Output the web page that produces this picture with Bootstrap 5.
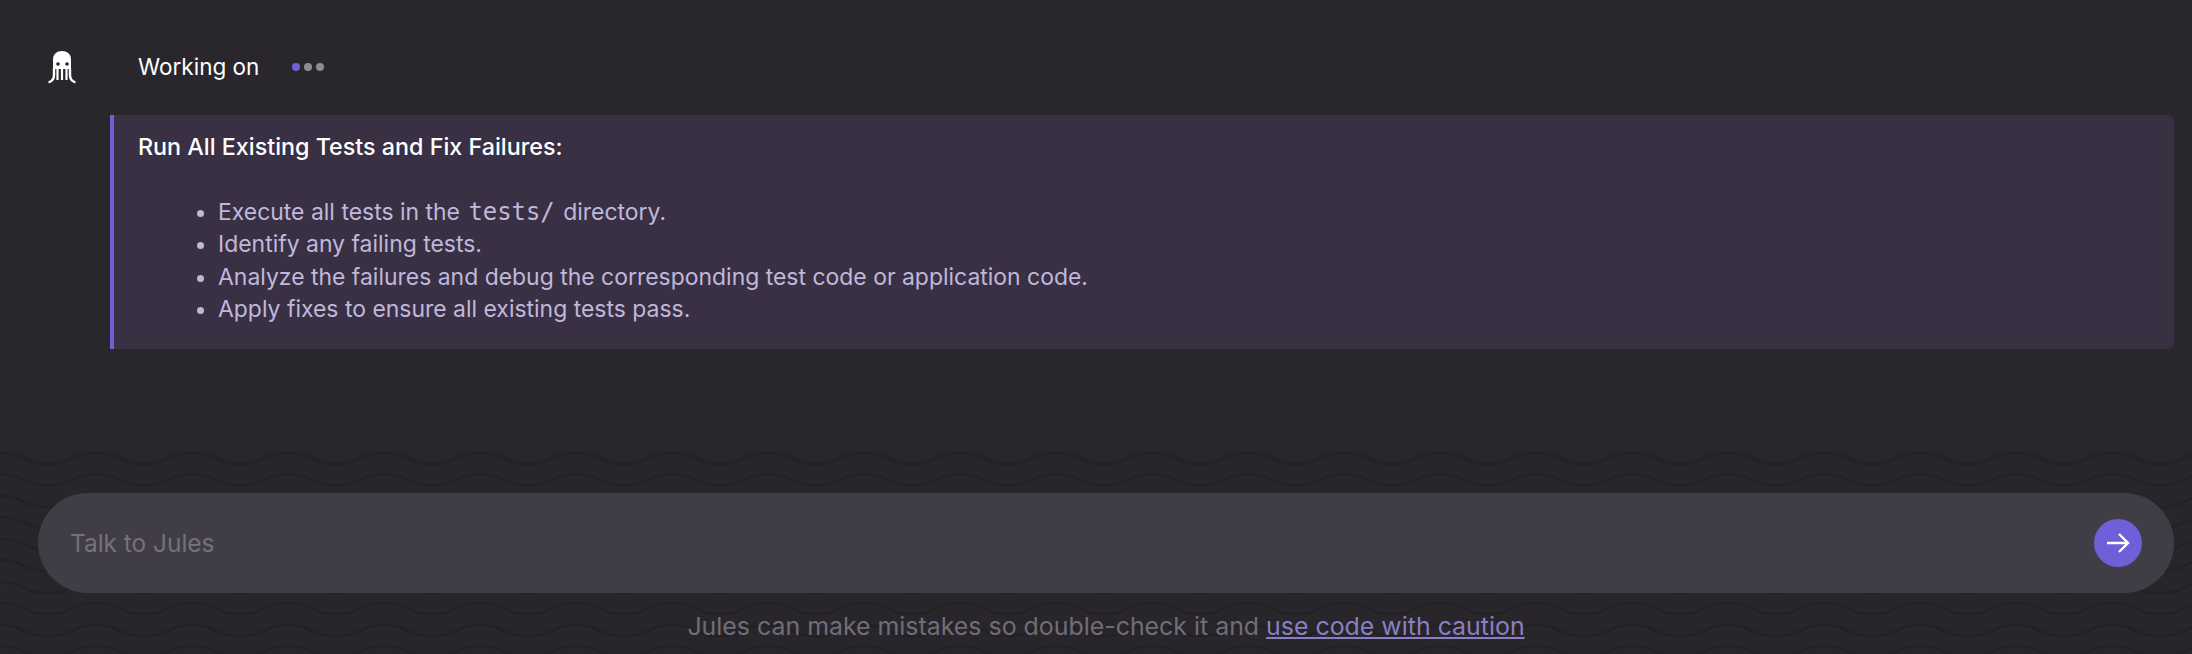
<!DOCTYPE html>
<html lang="en">
<head>
  <meta charset="UTF-8">
  <title>Jules</title>
  <link href="https://cdn.jsdelivr.net/npm/bootstrap@5.3.3/dist/css/bootstrap.min.css" rel="stylesheet">
  <style>
    html, body { height: 100%; }
    body { background: #29272b; font-family: Inter, "Noto Sans", sans-serif; overflow: hidden; }
    .app-shell { height: 654px; }
    .status-row { height: 115px; padding: 19px 0 0 46px; }
    .bot-icon { width: 32px; height: 36px; margin-right: 60px; }
    .status-text { font-size: 22.5px; color: #fff; width: 154px; }
    .dot { width: 8px; height: 8px; border-radius: 50%; background: #8f8d93; }
    .dot-on { background: #6f5fd8; }
    .plan-box { margin: 0 18px 0 110px; height: 234px; background: #393044; border-left: 4px solid #6f5fd8; border-radius: 0 6px 6px 0; padding: 16px 24px; font-size: 22.95px; line-height: 32.5px; }
    .plan-title { color: #fff; font-weight: 500; font-size: 23.3px; margin-bottom: 32px; }
    .plan-list { color: #c0b8dc; padding-left: 80px; margin: 0; }
    .plan-list code { font-family: "DejaVu Sans Mono", monospace; font-size: 23.9px; color: inherit; margin: 0 2px; }
    .wave-area { height: 204px; margin-top: auto; padding: 43px 18px 0 38px;
      background-color: #28262a;
      background-image: url("data:image/svg+xml,%3Csvg xmlns='http://www.w3.org/2000/svg' width='96' height='21.5'%3E%3Cpath d='M0 3C24 3 24 14 48 14S72 3 96 3' fill='none' stroke='%23232125' stroke-width='3'/%3E%3C/svg%3E"); }
    .talk-bar { height: 100px; background: #403d47; border-radius: 50px; padding: 0 32px; }
    .talk-input { background: transparent; border: 0; outline: 0; color: #fff; font-size: 24.4px; font-family: inherit; padding: 0; }
    .talk-input::placeholder { color: #75727b; opacity: 1; }
    .send-btn { width: 48px; height: 48px; background: #6f5fd8; border: 0; border-radius: 50%; }
    .disclaimer { font-size: 24.9px; color: #716d78; margin-top: 15px; line-height: 36px; }
    .disclaimer a { color: #8a7fc4; }
  </style>
</head>
<body>
<div class="app-shell d-flex flex-column">
  <div class="status-row d-flex align-items-center">
    <svg class="bot-icon" viewBox="0 0 32 36" aria-hidden="true">
      <path d="M7 20V10.5C7 5 11 2 16 2s9 3 9 8.500V20z" fill="#fff"/>
      <path d="M11.500 20v11M16 20v11M20.500 20v11" stroke="#fff" stroke-width="2.200" fill="none"/>
      <path d="M8 20v6c0 4-2 6-4.500 7M24 20v6c0 4 2 6 4.500 7" stroke="#fff" stroke-width="2.400" fill="none" stroke-linecap="round"/>
      <circle cx="12" cy="15" r="1.800" fill="#29272b"/>
      <circle cx="21" cy="15" r="1.800" fill="#29272b"/>
    </svg>
    <span class="status-text">Working on</span>
    <div class="d-flex gap-1">
      <span class="dot dot-on"></span><span class="dot"></span><span class="dot"></span>
    </div>
  </div>

  <div class="plan-box">
    <div class="plan-title">Run All Existing Tests and Fix Failures:</div>
    <ul class="plan-list">
      <li>Execute all tests in the <code>tests/</code> directory.</li>
      <li>Identify any failing tests.</li>
      <li>Analyze the failures and debug the corresponding test code or application code.</li>
      <li>Apply fixes to ensure all existing tests pass.</li>
    </ul>
  </div>

  <div class="wave-area">
    <div class="talk-bar d-flex align-items-center">
      <input class="talk-input flex-grow-1" type="text" placeholder="Talk to Jules">
      <button class="send-btn d-flex align-items-center justify-content-center p-0" type="button" aria-label="Send">
        <svg width="26" height="26" viewBox="0 0 26 26"><path d="M2 13h21M14 4l9 9-9 9" fill="none" stroke="#fff" stroke-width="2.400"/></svg>
      </button>
    </div>
    <div class="disclaimer text-center">Jules can make mistakes so double-check it and <a href="#">use code with caution</a></div>
  </div>
</div>
<script src="https://cdn.jsdelivr.net/npm/bootstrap@5.3.3/dist/js/bootstrap.bundle.min.js"></script>
</body>
</html>
